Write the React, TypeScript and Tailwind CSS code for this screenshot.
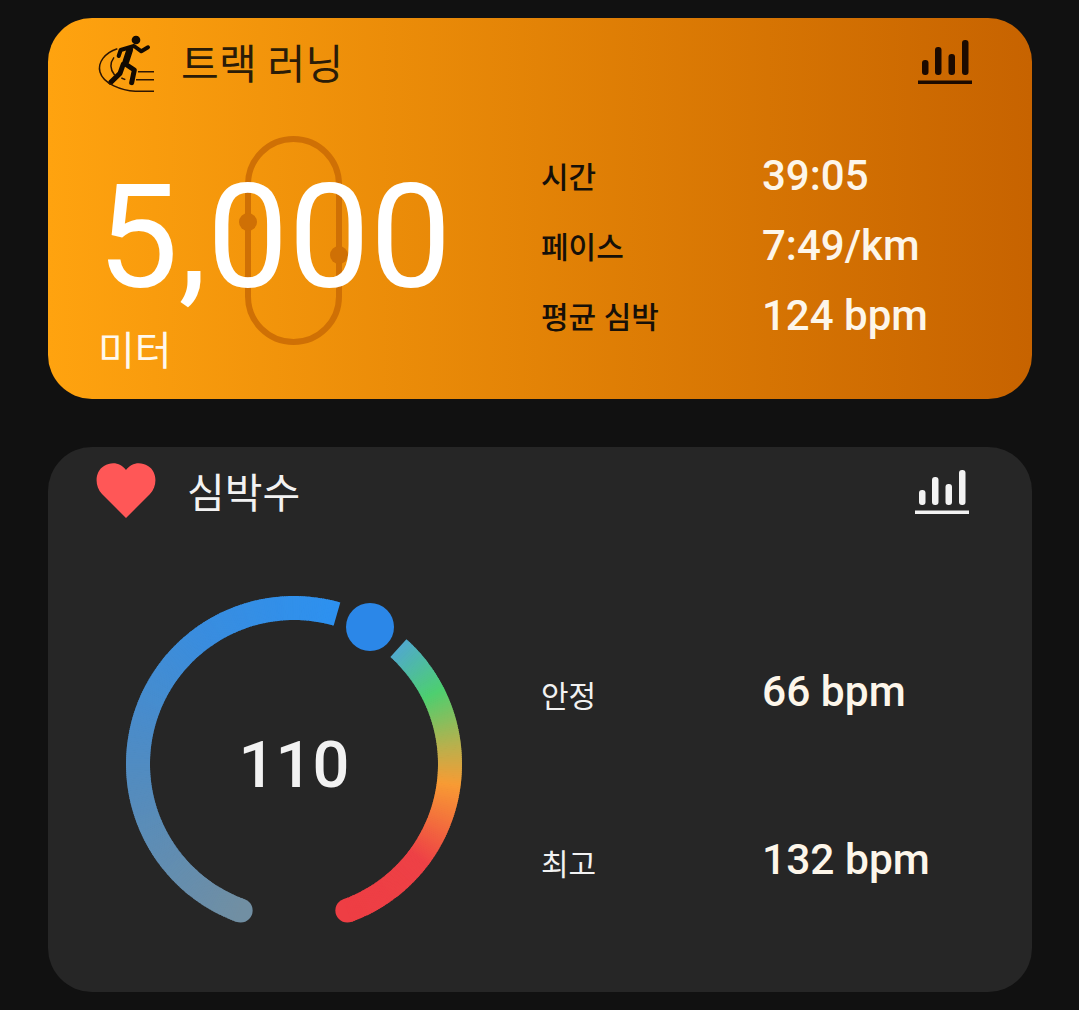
const FONT = "font-['Roboto','Noto_Sans_CJK_KR',sans-serif]";

function mix(a: number[], b: number[], t: number) {
  const c = a.map((v, i) => Math.round(v + (b[i] - v) * t));
  return `rgb(${c[0]},${c[1]},${c[2]})`;
}

function ramp(stops: [number, number[]][], t: number) {
  for (let i = 0; i < stops.length - 1; i++) {
    if (t <= stops[i + 1][0]) {
      const [p, a] = stops[i];
      const [q, b] = stops[i + 1];
      return mix(a, b, (t - p) / (q - p));
    }
  }
  return mix(stops[stops.length - 1][1], stops[stops.length - 1][1], 0);
}

// Angles in degrees, measured clockwise from 12 o'clock.
function pt(deg: number, r: number, c: number) {
  const a = (deg * Math.PI) / 180;
  return [c + r * Math.sin(a), c - r * Math.cos(a)];
}

function Arc({ from, to, stops }: { from: number; to: number; stops: [number, number[]][] }) {
  const n = Math.ceil((to - from) * 1.5);
  const c = 168;
  const r = 156;
  const segs = [];
  for (let i = 0; i < n; i++) {
    const a = from + ((to - from) * i) / n;
    const b = from + ((to - from) * (i + 1)) / n + (i < n - 1 ? 0.3 : 0);
    const [x1, y1] = pt(a, r, c);
    const [x2, y2] = pt(b, r, c);
    segs.push(
      <path
        key={i}
        d={`M${x1} ${y1}A${r} ${r} 0 0 1 ${x2} ${y2}`}
        fill="none"
        stroke={ramp(stops, (i + 0.5) / n)}
        strokeWidth={24}
      />,
    );
  }
  return <>{segs}</>;
}

function Gauge() {
  const blue: [number, number[]][] = [
    [0, [113, 143, 163]],
    [0.35, [84, 140, 190]],
    [0.7, [58, 141, 222]],
    [1, [45, 145, 240]],
  ];
  const heat: [number, number[]][] = [
    [0, [80, 170, 205]],
    [0.18, [78, 207, 112]],
    [0.36, [190, 175, 75]],
    [0.47, [248, 155, 52]],
    [0.72, [238, 65, 70]],
    [1, [238, 62, 68]],
  ];
  const [sx, sy] = pt(200, 156, 168);
  const [ex, ey] = pt(160, 156, 168);
  return (
    <svg width="336" height="336" viewBox="0 0 336 336" className="shrink-0">
      <circle cx={sx} cy={sy} r="12" fill="rgb(113,143,163)" />
      <circle cx={ex} cy={ey} r="12" fill="rgb(238,62,68)" />
      <Arc from={200} to={376} stops={blue} />
      <Arc from={42} to={160} stops={heat} />
      <circle cx="244" cy="31" r="24" fill="#2b87e8" />
    </svg>
  );
}

function BarsIcon({ color }: { color: string }) {
  return (
    <svg width="54" height="44" viewBox="0 0 54 44" fill={color}>
      <rect x="4" y="20" width="6.5" height="15" rx="3" />
      <rect x="17" y="7" width="6.5" height="28" rx="3" />
      <rect x="30.5" y="14" width="6.5" height="21" rx="3" />
      <rect x="44" y="0" width="6.5" height="35" rx="3" />
      <rect x="0" y="40.5" width="54" height="3.5" />
    </svg>
  );
}

function RunnerIcon() {
  return (
    <svg width="72" height="72" viewBox="0 0 216 216" fill="none" className="shrink-0">
      <circle cx="132" cy="36" r="13" fill="#120a02" />
      <g stroke="#120a02" strokeLinecap="round" strokeLinejoin="round">
        <path d="M113 66 L102 100" strokeWidth="20" />
        <path d="M80 84 L86 66 L126 54 L148 70 L168 58" strokeWidth="12" />
        <path d="M100 108 L127 126 L119 164" strokeWidth="15" />
        <path d="M94 108 L84 136 L56 163" strokeWidth="15" />
      </g>
      <path d="M76 62 C38 74 16 104 24 132 C34 168 90 188 130 190 L186 190" stroke="#2e1603" strokeWidth="4.5" />
      <path d="M66 88 C54 104 54 124 68 142" stroke="#2e1603" strokeWidth="4.5" />
      <path d="M138 131 H186 M132 155 H186 M88 150 L100 155" stroke="#2e1603" strokeWidth="4.5" />
    </svg>
  );
}

function Stat({
  label,
  value,
  dark,
  h,
  labelClass,
  valueClass,
}: {
  label: string;
  value: string;
  dark?: boolean;
  h: string;
  labelClass: string;
  valueClass: string;
}) {
  return (
    <div className={`flex items-center ${h}`}>
      <span
        className={`w-[221px] text-[30px] leading-none ${labelClass} ${dark ? "text-[#161008] font-medium" : "text-[#f2f2f2]"}`}
      >
        {label}
      </span>
      <span className={`leading-none font-medium text-[#fdf6ea] ${valueClass}`}>{value}</span>
    </div>
  );
}

export default function App() {
  return (
    <div className={`${FONT} w-[1079px] h-[1010px] bg-[#111111] px-[48px] pt-[18px] overflow-hidden`}>
      <section className="relative h-[381px] w-[984px] rounded-[44px] bg-gradient-to-r from-[#ffa30f] to-[#c76300] overflow-hidden">
        <svg
          width="97"
          height="209"
          viewBox="0 0 97 209"
          fill="none"
          className="absolute left-[197px] top-[118px] overflow-visible"
        >
          <rect x="3" y="3" width="91" height="203" rx="45.5" stroke="#cf7005" strokeWidth="6" />
          <circle cx="3" cy="86" r="9" fill="#cf7005" />
          <circle cx="94" cy="119" r="9" fill="#cf7005" />
        </svg>
        <header className="relative flex items-center h-[92px] pl-[44px] pr-[60px]">
          <RunnerIcon />
          <h2 className="ml-[17px] mt-[2px] text-[41px] leading-none font-normal text-[#2a1c08] tracking-[0.3px]">
            트랙 러닝
          </h2>
          <div className="ml-auto mt-[-4px]">
            <BarsIcon color="#1c0a00" />
          </div>
        </header>
        <div className="relative flex">
          <div className="w-[493px] pl-[49px]">
            <div className="mt-[47px] text-[145px] leading-[160px] font-[450] text-white">5,000</div>
            <div className="mt-[10px] pl-[1px] text-[40px] leading-[50px] text-[#fff8ec]">미터</div>
          </div>
          <div className="flex flex-col pt-[32px]">
            <Stat dark h="h-[70px]" labelClass="mt-[2px]" valueClass="mt-[-2px] text-[42px]" label="시간" value="39:05" />
            <Stat dark h="h-[70px]" labelClass="mt-[2px]" valueClass="mt-[-2px] text-[42px]" label="페이스" value="7:49/km" />
            <Stat dark h="h-[70px]" labelClass="mt-[2px]" valueClass="mt-[-2px] text-[42px]" label="평균 심박" value="124 bpm" />
          </div>
        </div>
      </section>

      <section className="mt-[48px] h-[545px] w-[984px] rounded-[44px] bg-[#262626] overflow-hidden">
        <header className="flex items-center h-[90px] pl-[47px] pr-[63px]">
          <svg width="62" height="57" viewBox="-1 -1 62 57" className="shrink-0 mt-[-3px]">
            <path
              d="M30 55 L6 31 C-2 23 -1 8 8 3 C16 -2 25 0 30 7 C35 0 44 -2 52 3 C61 8 62 23 54 31 Z"
              fill="#ff5757"
            />
          </svg>
          <h2 className="ml-[30px] mt-[4px] text-[41px] leading-none font-normal text-[#f2f2f2]">심박수</h2>
          <div className="ml-auto">
            <BarsIcon color="#f2f2f2" />
          </div>
        </header>
        <div className="flex">
          <div className="relative ml-[78px] mt-[59px] h-[336px] w-[336px]">
            <Gauge />
            <div className="absolute inset-0 flex items-center justify-center text-[65px] leading-none font-medium text-[#f2f2f2] pt-[2px]">
              110
            </div>
          </div>
          <div className="ml-[79px] mt-[130px] flex flex-col">
            <Stat h="h-[60px]" labelClass="mt-[0px]" valueClass="mt-[-9px] text-[42.5px]" label="안정" value="66 bpm" />
            <Stat h="h-[60px] mt-[108px]" labelClass="mt-[0px]" valueClass="mt-[-9px] text-[42.5px]" label="최고" value="132 bpm" />
          </div>
        </div>
      </section>
    </div>
  );
}
